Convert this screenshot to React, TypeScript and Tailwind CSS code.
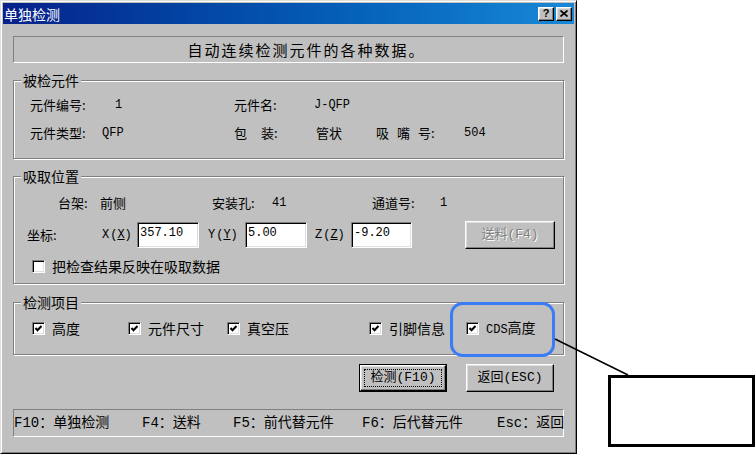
import React from "react";

const cjk = "font-['Noto_Sans_CJK_SC',sans-serif]";
const mono = "font-['Liberation_Mono','Noto_Sans_CJK_SC',monospace]";

const sunken =
  "border border-t-[#808080] border-l-[#808080] border-r-white border-b-white";
const raised =
  "border border-t-white border-l-white border-r-black border-b-black shadow-[inset_-1px_-1px_0_#808080,inset_1px_1px_0_#dfdfdf]";

function Group({
  title,
  className = "",
  children,
}: {
  title: string;
  className?: string;
  children: React.ReactNode;
}) {
  return (
    <div
      className={`relative border border-[#808080] shadow-[inset_1px_1px_0_#fff,1px_1px_0_#fff] ${className}`}
    >
      <span className="absolute -top-[9px] left-[7px] bg-[#c0c0c0] px-[2px] text-[14px] leading-[16px]">
        {title}
      </span>
      {children}
    </div>
  );
}

function Check({
  label,
  checked = true,
  className = "",
}: {
  label: React.ReactNode;
  checked?: boolean;
  className?: string;
}) {
  return (
    <div className={`flex shrink-0 items-center ${className}`}>
      <span
        className={`flex h-[13px] w-[13px] shrink-0 items-center justify-center bg-white ${sunken} shadow-[inset_1px_1px_0_#000,inset_-1px_-1px_0_#dfdfdf]`}
      >
        {checked && (
          <svg width="11" height="11" viewBox="0 0 11 11">
            <polyline
              points="2.5,5 4.5,7.2 8.5,3"
              fill="none"
              stroke="#000"
              strokeWidth="2"
            />
          </svg>
        )}
      </span>
      <span className="ml-[7px] text-[14px] leading-[16px]">{label}</span>
    </div>
  );
}

function Edit({ value, className = "" }: { value: string; className?: string }) {
  return (
    <div
      className={`h-[26px] shrink-0 bg-white pl-[2px] pt-[3px] text-[12px] leading-[14px] ${sunken} shadow-[inset_1px_1px_0_#000,inset_-1px_-1px_0_#dfdfdf] ${mono} ${className}`}
    >
      {value}
    </div>
  );
}

function AccessLabel({ k, className = "" }: { k: string; className?: string }) {
  return (
    <span className={`shrink-0 text-[12px] leading-[14px] ${mono} ${className}`}>
      {k}
      <span className="ml-[1px]">
        (<span className="underline">{k}</span>)
      </span>
    </span>
  );
}

function Dialog() {
  return (
    <div
      className={`flex h-[454px] w-[577px] shrink-0 flex-col border border-t-[#dfdfdf] border-l-[#dfdfdf] border-r-black border-b-black bg-[#c0c0c0] p-[2px] shadow-[inset_1px_1px_0_#fff,inset_-1px_-1px_0_#808080] text-black ${cjk}`}
    >
      {/* title bar */}
      <div className="flex h-[21px] shrink-0 items-center bg-linear-to-r from-[#08208a] to-[#1888d6] pl-[1px] pr-[2px]">
        <span className="text-[14px] leading-[16px] text-white">单独检测</span>
        <div className="ml-auto flex gap-[2px]">
          <div
            className={`flex h-[14px] w-[16px] items-center justify-center bg-[#c0c0c0] ${raised}`}
          >
            <span className="font-['Liberation_Sans',sans-serif] text-[11px] font-bold leading-[11px]">
              ?
            </span>
          </div>
          <div
            className={`flex h-[14px] w-[16px] items-center justify-center bg-[#c0c0c0] ${raised}`}
          >
            <svg width="8" height="7" viewBox="0 0 8 7">
              <path d="M0.5 0.5 L7.5 6.5 M7.5 0.5 L0.5 6.5" stroke="#000" strokeWidth="1.6" />
            </svg>
          </div>
        </div>
      </div>

      <div className="flex flex-col px-[10px]">
        {/* info line */}
        <div
          className={`mt-[12px] flex h-[27px] items-center justify-center pl-[36px] text-[15px] leading-[18px] tracking-[2px] ${sunken}`}
        >
          自动连续检测元件的各种数据。
        </div>

        {/* 被检元件 */}
        <Group title="被检元件" className="mt-[17px] h-[79px]">
          <div className="flex flex-col pl-[16px] pt-[10px] text-[13px] leading-[16px]">
            <div className="flex h-[28px] items-center">
              <span className="w-[85px] shrink-0">元件编号:</span>
              <span className={`w-[119px] shrink-0 ${mono} text-[12px]`}>1</span>
              <span className="w-[80px] shrink-0">元件名:</span>
              <span className={`${mono} text-[12px]`}>J-QFP</span>
            </div>
            <div className="flex h-[28px] items-center">
              <span className="w-[72px] shrink-0">元件类型:</span>
              <span className={`w-[132px] shrink-0 ${mono} text-[12px]`}>QFP</span>
              <span className="flex w-[82px] shrink-0">
                包<span className="ml-[14px]">装:</span>
              </span>
              <span className="w-[60px] shrink-0">管状</span>
              <span className="flex w-[88px] shrink-0">
                吸<span className="ml-[8px]">嘴</span>
                <span className="ml-[8px]">号:</span>
              </span>
              <span className={`${mono} text-[12px]`}>504</span>
            </div>
          </div>
        </Group>

        {/* 吸取位置 */}
        <Group title="吸取位置" className="mt-[17px] h-[108px]">
          <div className="flex flex-col pt-[15px] text-[13px] leading-[16px]">
            <div className="flex h-[22px] items-center pl-[44px]">
              <span className="w-[42px] shrink-0">台架:</span>
              <span className="w-[112px] shrink-0">前侧</span>
              <span className="w-[60px] shrink-0">安装孔:</span>
              <span className={`w-[100px] shrink-0 ${mono} text-[12px]`}>41</span>
              <span className="w-[68px] shrink-0">通道号:</span>
              <span className={`${mono} text-[12px]`}>1</span>
            </div>
            <div className="mt-[7px] flex h-[28px] items-center pl-[13px]">
              <span className="w-[75px] shrink-0">坐标:</span>
              <AccessLabel k="X" className="w-[35px]" />
              <Edit value="357.10" className="w-[62px]" />
              <AccessLabel k="Y" className="ml-[9px] w-[37px]" />
              <Edit value="5.00" className="w-[62px]" />
              <AccessLabel k="Z" className="ml-[8px] w-[36px]" />
              <Edit value="-9.20" className="w-[61px]" />
              <div
                className={`ml-[53px] flex h-[28px] w-[90px] shrink-0 items-center justify-center ${raised} text-[13px] leading-[16px] text-[#808080] [text-shadow:1px_1px_0_#fff] ${mono}`}
              >
                送料(F4)
              </div>
            </div>
            <div className="mt-[7px] flex h-[20px] items-center pl-[18px]">
              <Check label="把检查结果反映在吸取数据" checked={false} />
            </div>
          </div>
        </Group>

        {/* 检测项目 */}
        <Group title="检测项目" className="mt-[18px] h-[53px]">
          <div className="flex h-[20px] items-center pl-[18px] mt-[15px]">
            <Check label="高度" className="w-[96px]" />
            <Check label="元件尺寸" className="w-[99px]" />
            <Check label="真空压" className="w-[142px]" />
            <Check label="引脚信息" className="w-[97px]" />
            <Check
              label={
                <span>
                  <span className={`${mono} text-[12px]`}>CDS</span>高度
                </span>
              }
            />
          </div>
        </Group>

        {/* buttons */}
        <div className="mt-[9px] flex h-[28px] justify-end gap-[19px] pr-[10px]">
          <div className="h-[28px] w-[88px] border border-black">
            <div
              className={`relative flex h-full w-full items-center justify-center ${raised} text-[13px] leading-[16px] ${mono}`}
            >
              <span className="pointer-events-none absolute inset-[3px] border border-dotted border-black" />
              检测(F10)
            </div>
          </div>
          <div
            className={`flex h-[28px] w-[88px] items-center justify-center ${raised} text-[13px] leading-[16px] ${mono}`}
          >
            返回(ESC)
          </div>
        </div>

        {/* status bar */}
        <div
          className={`mt-[17px] flex h-[28px] items-center text-[14px] leading-[16px] ${sunken} ${mono}`}
        >
          <span className="w-[128px] shrink-0">F10：单独检测</span>
          <span className="w-[91px] shrink-0">F4：送料</span>
          <span className="w-[129px] shrink-0">F5：前代替元件</span>
          <span className="w-[135px] shrink-0">F6：后代替元件</span>
          <span className="shrink-0">Esc：返回</span>
        </div>
      </div>
    </div>
  );
}

export default function App() {
  return (
    <div className="relative flex h-[457px] w-[756px] items-start overflow-hidden bg-white">
      <Dialog />
      <div className="ml-[31px] mt-[375px] h-[72px] w-[147px] shrink-0 border-[3px] border-black" />
      <svg
        className="pointer-events-none absolute left-0 top-0"
        width="756"
        height="457"
        viewBox="0 0 756 457"
      >
        <rect
          x="451.5"
          y="303.5"
          width="102"
          height="52"
          rx="11"
          fill="none"
          stroke="#3a7bf6"
          strokeWidth="3"
        />
        <line x1="555" y1="339" x2="628" y2="375" stroke="#000" strokeWidth="1.5" />
      </svg>
    </div>
  );
}
